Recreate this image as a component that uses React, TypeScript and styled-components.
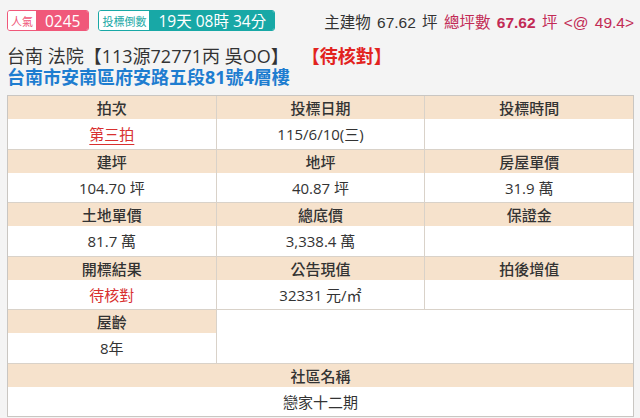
import React from "react";
import styled, { createGlobalStyle } from "styled-components";

const GlobalStyle = createGlobalStyle`
  html, body { margin: 0; padding: 0; }
  body {
    background: #f4f4f4;
    font-family: "Open Sans", "Noto Sans CJK TC", sans-serif;
    color: #333;
  }
`;

const Page = styled.div`
  padding: 10px 6px 0 7px;
`;

const TopBar = styled.div`
  display: flex;
  align-items: center;
  justify-content: space-between;
  height: 21px;
`;

const Badges = styled.div`
  display: flex;
  gap: 9px;
`;

const Badge = styled.div<{ $c: string }>`
  display: inline-flex;
  height: 21px;
  box-sizing: border-box;
  border: 1px solid ${(p) => p.$c};
  border-radius: 3px;
  overflow: hidden;
  color: ${(p) => p.$c};
`;

const BadgeLabel = styled.span`
  display: flex;
  align-items: center;
  background: #fff;
  font-size: 11px;
  padding: 0 3px;
`;

const BadgeValue = styled.span<{ $c: string }>`
  display: flex;
  align-items: center;
  background: ${(p) => p.$c};
  color: #fff;
  font-size: 15.5px;
  padding: 0 8px 0 9px;
`;

const Info = styled.div`
  font-family: "Liberation Sans", "Noto Sans CJK TC", sans-serif;
  font-size: 15.5px;
  word-spacing: 2px;
  color: #333;
  white-space: nowrap;
`;

const Accent = styled.span<{ $bold?: boolean }>`
  color: #c22a55;
  font-weight: ${(p) => (p.$bold ? 700 : 400)};
`;

const TitleBlock = styled.div`
  margin-top: 14px;
  font-size: 18px;
`;

const TitleLine = styled.div`
  color: #333;
  line-height: 22px;
  white-space: nowrap;
`;

const Status = styled.span`
  color: #e2231e;
  font-weight: 700;
  margin-left: 22px;
`;

const Address = styled.div`
  color: #1e7dd0;
  font-weight: 700;
  line-height: 20px;
`;

const Grid = styled.div`
  margin-top: 8px;
  display: grid;
  grid-template-columns: repeat(3, 1fr);
  gap: 1px;
  background: #d9d2c9;
  border: 1px solid #c9c6c2;
`;

const Field = styled.div<{ $span?: number }>`
  display: flex;
  flex-direction: column;
  grid-column: span ${(p) => p.$span ?? 1};
`;

const Blank = styled.div<{ $span: number }>`
  grid-column: span ${(p) => p.$span};
  background: #fff;
`;

const Head = styled.div`
  height: 23px;
  display: flex;
  align-items: center;
  justify-content: center;
  background: #f6e2cc;
  font-size: 15px;
  font-weight: 500;
  color: #333;
`;

const Value = styled.div<{ $red?: boolean; $link?: boolean }>`
  height: 29.5px;
  display: flex;
  align-items: center;
  justify-content: center;
  background: #fff;
  font-size: 15px;
  color: ${(p) => (p.$red ? "#d8302f" : "#333")};
  text-decoration: ${(p) => (p.$link ? "underline" : "none")};
  text-underline-offset: 4px;
`;

type F = { h: string; v?: string; red?: boolean; link?: boolean };

const fields: F[] = [
  { h: "拍次", v: "第三拍", red: true, link: true },
  { h: "投標日期", v: "115/6/10(三)" },
  { h: "投標時間" },
  { h: "建坪", v: "104.70 坪" },
  { h: "地坪", v: "40.87 坪" },
  { h: "房屋單價", v: "31.9 萬" },
  { h: "土地單價", v: "81.7 萬" },
  { h: "總底價", v: "3,338.4 萬" },
  { h: "保證金" },
  { h: "開標結果", v: "待核對", red: true },
  { h: "公告現值", v: "32331 元/㎡" },
  { h: "拍後增值" },
];

export default function App() {
  return (
    <>
      <GlobalStyle />
      <Page>
        <TopBar>
          <Badges>
            <Badge $c="#f0587a">
              <BadgeLabel>人氣</BadgeLabel>
              <BadgeValue $c="#f0587a">0245</BadgeValue>
            </Badge>
            <Badge $c="#18a8a6">
              <BadgeLabel>投標倒數</BadgeLabel>
              <BadgeValue $c="#18a8a6">19天 08時 34分</BadgeValue>
            </Badge>
          </Badges>
          <Info>
            主建物 67.62 坪 <Accent>總坪數</Accent> <Accent $bold>67.62</Accent>{" "}
            <Accent>坪 &lt;@ 49.4&gt;</Accent>
          </Info>
        </TopBar>
        <TitleBlock>
          <TitleLine>
            台南 法院【113源72771丙 吳OO】<Status>【待核對】</Status>
          </TitleLine>
          <Address>台南市安南區府安路五段81號4層樓</Address>
        </TitleBlock>
        <Grid>
          {fields.map((f) => (
            <Field key={f.h}>
              <Head>{f.h}</Head>
              <Value $red={f.red} $link={f.link}>
                {f.v ?? ""}
              </Value>
            </Field>
          ))}
          <Field>
            <Head>屋齡</Head>
            <Value>8年</Value>
          </Field>
          <Blank $span={2} />
          <Field $span={3}>
            <Head>社區名稱</Head>
            <Value>戀家十二期</Value>
          </Field>
        </Grid>
      </Page>
    </>
  );
}
